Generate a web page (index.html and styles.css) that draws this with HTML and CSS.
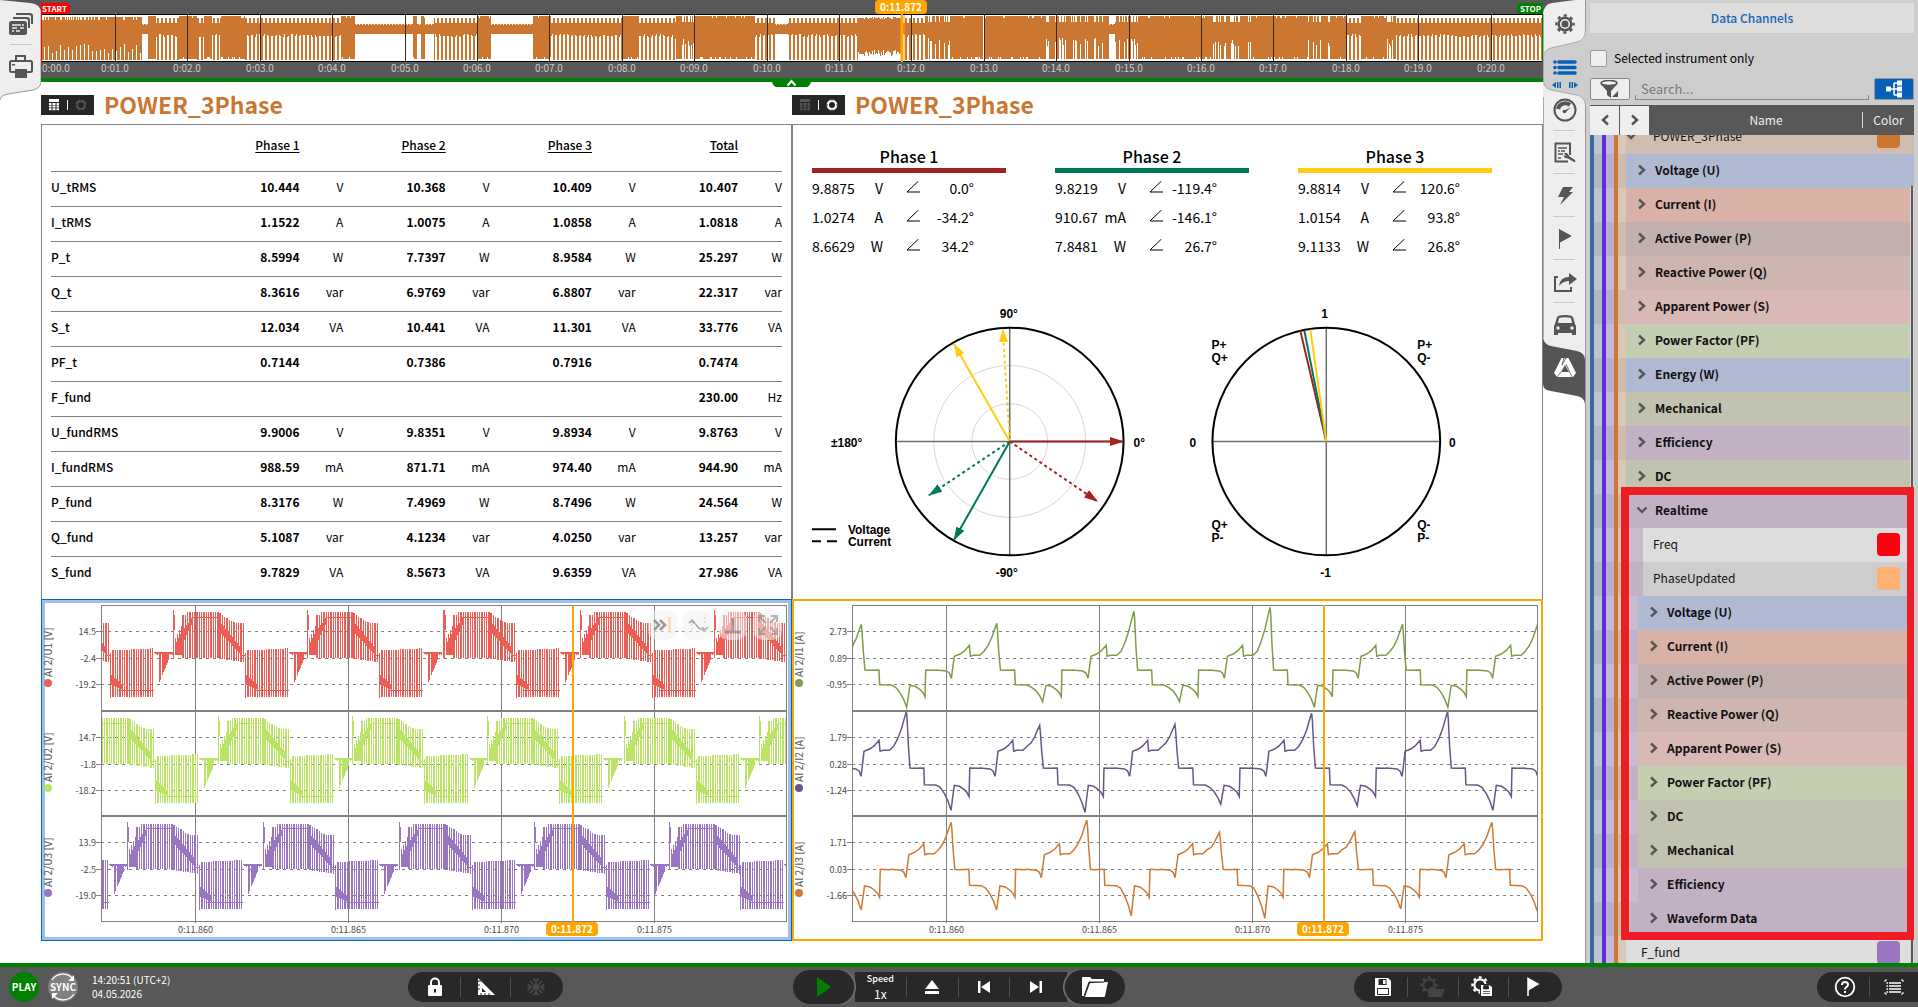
FILE: index.html
```html
<!DOCTYPE html>
<html lang="en">
<head>
<meta charset="utf-8">
<title>POWER_3Phase</title>
<link rel="stylesheet" href="styles.css">
</head>
<body>
<svg class="defs" aria-hidden="true">
  <symbol id="grid" viewBox="0 0 12 12"><path d="M1 0h10v3H1zM1 4h2.500v2H1zM4.500 4h3v2h-3zM8.500 4H11v2H8.500zM1 6.600h2.500v2H1zM4.500 6.600h3v2h-3zM8.500 6.600H11v2H8.500zM1 9.200h2.500v2H1zM4.500 9.200h3v2h-3zM8.500 9.200H11v2H8.500z" fill="currentColor"/></symbol>
  <symbol id="ring" viewBox="0 0 12 12"><circle cx="6" cy="6" r="4.200" fill="none" stroke="currentColor" stroke-width="2.400"/><path d="M6 0v2M12 6h-2M6 12v-2M0 6h2" stroke="#262626" stroke-width=".8"/></symbol>
  <symbol id="angle" viewBox="0 0 14 14"><path d="M12.500 0 1 11H14" fill="none" stroke="#000"/></symbol>
  <symbol id="right" viewBox="0 0 10 12"><path d="M2 1.500 7 6 2 10.500" fill="none" stroke="currentColor" stroke-width="2.400"/></symbol>
  <symbol id="left" viewBox="0 0 10 12"><path d="M8 1.500 3 6l5 4.500" fill="none" stroke="currentColor" stroke-width="2.400"/></symbol>
  <symbol id="down" viewBox="0 0 12 12"><path d="M1.500 3.500 6 8l4.500-4.500" fill="none" stroke="currentColor" stroke-width="2.400"/></symbol>
  <symbol id="gear" viewBox="0 0 20 20"><g fill="none" stroke="currentColor"><circle cx="10" cy="10" r="6.300" stroke-width="2.400"/><circle cx="10" cy="10" r="8.500" stroke-width="2.400" stroke-dasharray="3.200 3.476" stroke-dashoffset="1.600"/></g></symbol>
</svg>

<div class="workspace">
  <nav class="rail rail-left" aria-label="Screens">
    <svg class="rail-shape" width="41" height="100" viewBox="0 0 41 100"><path d="M0 0h41v78H0z" fill="#585858"/><path d="M0 78h41v4H0z" fill="#008000"/><path d="M0 82h41v18H0z" fill="#fff"/><path d="M0 0l30 3q11 1 11 10v69q0 6-8 8L8 94q-7 1-8 6z" fill="#eee"/><path d="M41 13v69q0 6-8 8L8 94q-7 1-8 6" fill="none" stroke="#999"/></svg>
    <button class="rail-btn" aria-label="Displays"><svg width="24" height="22" viewBox="0 0 24 22"><g fill="#555"><path d="M7 0h14q3 0 3 3v8h-2V4q0-2-2-2H7z"/><path d="M4 4h14q3 0 3 3v8h-2V8q0-2-2-2H4z"/><rect y="8" width="18" height="14" rx="2.500"/></g><path d="M3 12h9M13 12h2M3 15h5M11 15h4M3 18h2M7 18h4" stroke="#eee" stroke-width="1.300"/></svg></button>
    <button class="rail-btn" aria-label="Print"><svg width="24" height="23" viewBox="0 0 24 23"><g fill="none" stroke="#555" stroke-width="2"><path d="M7 7V1h9v6"/><rect x="1" y="6" width="22" height="11" rx="1.500"/></g><path d="M3 9h3v1.500H3zM6 14h12v9H6z" fill="#555"/></svg></button>
  </nav>

  <main class="main">
    <header class="timeline"><svg id="timeline" class="fill"></svg>
      <button class="collapse" aria-label="Collapse overview"><svg width="39" height="9" viewBox="0 0 39 9"><path d="M0 0h39v4q-1 4-4 5H4Q1 8 0 4z" fill="#008000"/><path d="M15.500 7.500l4-4.500 4 4.500" fill="none" stroke="#fff" stroke-width="2"/></svg></button>
    </header>

    <div class="titles">
      <div class="title"><div class="toggle"><button aria-label="Table view"><svg width="12" height="12"><use href="#grid"/></svg></button><i></i><button class="off" aria-label="Vector view"><svg width="12" height="12"><use href="#ring"/></svg></button></div><h1>POWER_3Phase</h1></div>
      <div class="title"><div class="toggle"><button class="off" aria-label="Table view"><svg width="12" height="12"><use href="#grid"/></svg></button><i></i><button aria-label="Vector view"><svg width="12" height="12"><use href="#ring"/></svg></button></div><h1>POWER_3Phase</h1></div>
    </div>

    <div class="pair panels">
      <section class="panel power">
        <table>
          <colgroup><col class="c-name"><col class="c-val"><col class="c-unit"><col class="c-val"><col class="c-unit"><col class="c-val"><col class="c-unit"><col class="c-val"><col class="c-unit"></colgroup>
          <thead><tr><td></td><th scope="col">Phase 1</th><td></td><th scope="col">Phase 2</th><td></td><th scope="col">Phase 3</th><td></td><th scope="col">Total</th><td></td></tr></thead>
          <tbody>
            <tr><th scope="row">U_tRMS</th><td>10.444</td><td>V</td><td>10.368</td><td>V</td><td>10.409</td><td>V</td><td>10.407</td><td>V</td></tr>
            <tr><th scope="row">I_tRMS</th><td>1.1522</td><td>A</td><td>1.0075</td><td>A</td><td>1.0858</td><td>A</td><td>1.0818</td><td>A</td></tr>
            <tr><th scope="row">P_t</th><td>8.5994</td><td>W</td><td>7.7397</td><td>W</td><td>8.9584</td><td>W</td><td>25.297</td><td>W</td></tr>
            <tr><th scope="row">Q_t</th><td>8.3616</td><td>var</td><td>6.9769</td><td>var</td><td>6.8807</td><td>var</td><td>22.317</td><td>var</td></tr>
            <tr><th scope="row">S_t</th><td>12.034</td><td>VA</td><td>10.441</td><td>VA</td><td>11.301</td><td>VA</td><td>33.776</td><td>VA</td></tr>
            <tr><th scope="row">PF_t</th><td>0.7144</td><td></td><td>0.7386</td><td></td><td>0.7916</td><td></td><td>0.7474</td><td></td></tr>
            <tr><th scope="row">F_fund</th><td></td><td></td><td></td><td></td><td></td><td></td><td>230.00</td><td>Hz</td></tr>
            <tr><th scope="row">U_fundRMS</th><td>9.9006</td><td>V</td><td>9.8351</td><td>V</td><td>9.8934</td><td>V</td><td>9.8763</td><td>V</td></tr>
            <tr><th scope="row">I_fundRMS</th><td>988.59</td><td>mA</td><td>871.71</td><td>mA</td><td>974.40</td><td>mA</td><td>944.90</td><td>mA</td></tr>
            <tr><th scope="row">P_fund</th><td>8.3176</td><td>W</td><td>7.4969</td><td>W</td><td>8.7496</td><td>W</td><td>24.564</td><td>W</td></tr>
            <tr><th scope="row">Q_fund</th><td>5.1087</td><td>var</td><td>4.1234</td><td>var</td><td>4.0250</td><td>var</td><td>13.257</td><td>var</td></tr>
            <tr><th scope="row">S_fund</th><td>9.7829</td><td>VA</td><td>8.5673</td><td>VA</td><td>9.6359</td><td>VA</td><td>27.986</td><td>VA</td></tr>
          </tbody>
        </table>
      </section>

      <section class="panel vectors">
        <div class="phases">
          <div class="phase"><h2 class="red">Phase 1</h2><table>
            <tr><td>9.8875</td><td>V</td><td><svg width="14" height="14"><use href="#angle"/></svg></td><td>0.0°</td></tr>
            <tr><td>1.0274</td><td>A</td><td><svg width="14" height="14"><use href="#angle"/></svg></td><td>-34.2°</td></tr>
            <tr><td>8.6629</td><td>W</td><td><svg width="14" height="14"><use href="#angle"/></svg></td><td>34.2°</td></tr></table></div>
          <div class="phase"><h2 class="green">Phase 2</h2><table>
            <tr><td>9.8219</td><td>V</td><td><svg width="14" height="14"><use href="#angle"/></svg></td><td>-119.4°</td></tr>
            <tr><td>910.67</td><td>mA</td><td><svg width="14" height="14"><use href="#angle"/></svg></td><td>-146.1°</td></tr>
            <tr><td>7.8481</td><td>W</td><td><svg width="14" height="14"><use href="#angle"/></svg></td><td>26.7°</td></tr></table></div>
          <div class="phase"><h2 class="yellow">Phase 3</h2><table>
            <tr><td>9.8814</td><td>V</td><td><svg width="14" height="14"><use href="#angle"/></svg></td><td>120.6°</td></tr>
            <tr><td>1.0154</td><td>A</td><td><svg width="14" height="14"><use href="#angle"/></svg></td><td>93.8°</td></tr>
            <tr><td>9.1133</td><td>W</td><td><svg width="14" height="14"><use href="#angle"/></svg></td><td>26.8°</td></tr></table></div>
        </div>
        <svg class="phasor" viewBox="0 0 750 336">
          <defs>
            <marker id="m-red" viewBox="0 0 14 10" refX="13.500" refY="5" markerWidth="14" markerHeight="10" markerUnits="userSpaceOnUse" orient="auto"><path d="M0 .5 14 5 0 9.500z" fill="#a02222"/></marker>
            <marker id="m-green" viewBox="0 0 14 10" refX="13.500" refY="5" markerWidth="14" markerHeight="10" markerUnits="userSpaceOnUse" orient="auto"><path d="M0 .5 14 5 0 9.500z" fill="#00785a"/></marker>
            <marker id="m-yellow" viewBox="0 0 14 10" refX="13.500" refY="5" markerWidth="14" markerHeight="10" markerUnits="userSpaceOnUse" orient="auto"><path d="M0 .5 14 5 0 9.500z" fill="#ffcc10"/></marker>
          </defs>
          <g fill="none" stroke="#d6d6d6"><circle cx="217" cy="180" r="76"/><circle cx="217" cy="180" r="38"/></g>
          <g stroke="#6e6e6e" stroke-width="1.500"><path d="M103 180h228M217 66v228M420 180h228M534 66v228"/></g>
          <g fill="none" stroke="#000" stroke-width="2"><circle cx="217" cy="180" r="114"/><circle cx="534" cy="180" r="114"/></g>
          <g stroke-width="2">
            <path d="M217 180 161 82" stroke="#ffcc10" marker-end="url(#m-yellow)"/>
            <path d="M217 180 210 67" stroke="#ffcc10" stroke-dasharray="3 3" marker-end="url(#m-yellow)"/>
            <path d="M217 180H331" stroke="#a02222" marker-end="url(#m-red)"/>
            <path d="M217 180 305 240" stroke="#a02222" stroke-dasharray="3 3" marker-end="url(#m-red)"/>
            <path d="M217 180 161 279" stroke="#00785a" marker-end="url(#m-green)"/>
            <path d="M217 180 136 234" stroke="#00785a" stroke-dasharray="3 3" marker-end="url(#m-green)"/>
            <path d="M534 180 508 69" stroke="#a02222"/><path d="M534 180 512 69" stroke="#00785a"/><path d="M534 180 518 68" stroke="#ffcc10"/>
            <path d="M19 268h24M19 280h9m6 0h10" stroke="#000"/>
          </g>
          <text x="207" y="56">90°</text><text x="38" y="186">±180°</text><text x="341" y="186">0°</text><text x="203" y="316">-90°</text>
          <text x="55" y="273">Voltage</text><text x="55" y="285">Current</text>
          <text x="529" y="56">1</text><text x="528" y="316">-1</text><text x="397" y="186">0</text><text x="657" y="186">0</text>
          <text x="419" y="87">P+</text><text x="419" y="100">Q+</text><text x="625" y="87">P+</text><text x="625" y="100">Q-</text>
          <text x="419" y="268">Q+</text><text x="419" y="281">P-</text><text x="625" y="268">Q-</text><text x="625" y="281">P-</text>
        </svg>
      </section>
    </div>

    <div class="pair">
      <section class="scope selected"><svg id="voltage" class="fill"></svg>
        <div class="tools">
          <button aria-label="Go to cursor"><svg width="24" height="20" viewBox="0 0 24 20"><path d="M3 5l5 5-5 5M9 5l5 5-5 5" fill="none" stroke="#999" stroke-width="2.500"/><path d="M18.500 2v16" stroke="#fcd89a" stroke-width="2"/></svg></button>
          <button aria-label="Autoscale"><svg width="24" height="20" viewBox="0 0 24 20"><path d="M3 8l3-3 3 3M6 5v2q2 0 5 4t8 4M16 12l3 3 3-3" fill="none" stroke="#aaa" stroke-width="1.500"/><path d="M6 9v8M19 2v8" stroke="#ccc" stroke-dasharray="2 2"/></svg></button>
          <button aria-label="Stack axes"><svg width="24" height="20" viewBox="0 0 24 20"><path d="M4 17h16M12 3v13" stroke="#777" stroke-opacity=".6" stroke-width="3"/></svg></button>
          <button aria-label="Full screen"><svg width="24" height="20" viewBox="0 0 24 20"><path d="M3 7V1h6M15 1h6v6M21 13v6h-6M9 19H3v-6M3 1l7 7M21 1l-7 7M21 19l-7-7M3 19l7-7" fill="none" stroke="#888" stroke-opacity=".6" stroke-width="2"/></svg></button>
        </div>
      </section>
      <section class="scope"><svg id="current" class="fill"></svg></section>
    </div>
  </main>

  <nav class="rail rail-right" aria-label="Tools">
    <svg class="rail-shape" width="43" height="406" viewBox="0 0 43 406"><path d="M0 0h43v78H0z" fill="#585858"/><path d="M0 78h43v4H0z" fill="#008000"/><path d="M0 14q1-10 9-11L32 0h10v360L0 345z" fill="#eee"/><path d="M42.500 0v406" stroke="#999"/><path d="M43 30h-1q1 10-8 12L8 48q-7 2-7.500 8v24q0 8 7.500 10l26 5q8 2 8.500 10H43z" fill="#cdcdcd"/><path d="M42.500 30q0 10-8.500 12L8 48q-7 2-7.500 8v24q0 8 7.500 10l26 5q8 2 8.500 10M.5 97v240M.5 14v42" fill="none" stroke="#aaa"/><path d="M0 337q1 8 8 9l26 5q8 2 8 9v44q-1-7-8-8l-26-5q-8-1-8-7z" fill="#555"/></svg>
    <button class="rail-btn" aria-label="Settings"><svg width="20" height="20"><use href="#gear"/><circle cx="10" cy="10" r="3.500" fill="#555"/></svg></button>
    <button class="rail-btn list" aria-label="Data channels"><svg width="26" height="28" viewBox="0 0 26 28"><g stroke="#0560b8" stroke-width="3.600"><path d="M7 2h16M7 7.500h16M7 13h16" stroke-linecap="round"/></g><g fill="#0560b8"><circle cx="3" cy="2" r="1.800"/><circle cx="3" cy="7.500" r="1.800"/><circle cx="3" cy="13" r="1.800"/><path d="M0 25l4-3v6zM26 25l-4-3v6zM5 22h1.500v6H5zM7.500 22H9v6H7.500zM17 22h1.500v6H17zM19.500 22H21v6h-1.500z"/></g></svg></button>
    <button class="rail-btn" aria-label="Instruments"><svg width="24" height="24" viewBox="0 0 24 24"><circle cx="12" cy="12" r="10.500" fill="none" stroke="#555" stroke-width="2"/><path d="M5 11a7.500 7.500 0 0 1 12-4" fill="none" stroke="#555" stroke-width="4"/><path d="M10 13l8-3.500-6.500 5.500z" fill="#555"/><circle cx="11.500" cy="13.500" r="1.800" fill="#555"/></svg></button>
    <button class="rail-btn" aria-label="Instrument properties"><svg width="24" height="24" viewBox="0 0 24 24"><path d="M17 14V2.500H2.500v18H15" fill="none" stroke="#555" stroke-width="2"/><path d="M5 7h9M5 10h2M8 10h4M5 13h5M5 17h3" stroke="#555" stroke-width="1.500"/><path d="M11 12q3-1 4.500 2l.5 1 6 4q1 2-1 2l-6-3.500q-4 0-4.500-3.500l2.500 1z" fill="#555"/></svg></button>
    <button class="rail-btn" aria-label="Triggers"><svg width="18" height="22" viewBox="0 0 18 22"><path d="M7 2h10l-4 5h4L4 20l4-8H2z" fill="#555"/></svg></button>
    <button class="rail-btn" aria-label="Events"><svg width="16" height="22" viewBox="0 0 16 22"><path d="M2.500 1v20M3 2l11 6-11 6z" fill="#555" stroke="#555"/></svg></button>
    <button class="rail-btn" aria-label="Export"><svg width="24" height="22" viewBox="0 0 24 22"><path d="M5 6H2v14h16v-4" fill="none" stroke="#555" stroke-width="2"/><path d="M6 15q1-9 10-9V2l8 6-8 6v-4q-6 0-10 5z" fill="#555"/></svg></button>
    <button class="rail-btn" aria-label="Vehicle"><svg width="24" height="22" viewBox="0 0 24 22"><path d="M4 3q1-2 8-2t8 2l2 7 1 2v9h-4v-2H5v2H1v-9l1-2zM6 4 5 9h14l-1-5q-6-1.500-12 0z" fill="#555" fill-rule="evenodd"/><circle cx="5" cy="14" r="1.700" fill="#eee"/><circle cx="19" cy="14" r="1.700" fill="#eee"/></svg></button>
    <button class="rail-btn" aria-label="Power"><svg width="24" height="22" viewBox="0 0 24 22"><path d="M8.500 1h7L23 16l-3 4H4l-3-4zM12 8l-4 7h8z" fill="#fff" fill-rule="evenodd"/><path d="M11 1 13 1 9 8zM13 7l6 13M4 20l4-5" stroke="#555" fill="none" stroke-width=".8"/></svg></button>
  </nav>

  <aside class="side">
    <h2 class="side-title">Data Channels</h2>
    <label class="only"><input type="checkbox"> Selected instrument only</label>
    <div class="filter">
      <button class="filter-btn" aria-label="Filter"><svg width="20" height="18" viewBox="0 0 20 18"><ellipse cx="9" cy="3" rx="8" ry="2.500" fill="#eee" stroke="#555" stroke-width="1.500"/><path d="M1 4.500Q9 7.500 17 4.500L11 11v7L7 15v-4zM18 11v6h-6z" fill="#555"/></svg></button>
      <input class="search" type="text" placeholder="Search..." aria-label="Search channels">
      <button class="filter-btn tree-btn" aria-label="Tree view"><svg width="20" height="18" viewBox="0 0 20 18"><path d="M5 9h8M10 3v12M10 3h4M10 15h4" stroke="#fff" stroke-width="1.500" fill="none"/><path d="M2 6.500h5v5H2zM13 .5h5v5h-5zM13 6.500h5v5h-5zM13 12.500h5v5h-5z" fill="#fff"/></svg></button>
    </div>
    <div class="list-head"><button aria-label="Previous columns"><svg width="10" height="12"><use href="#left"/></svg></button><button aria-label="Next columns"><svg width="10" height="12"><use href="#right"/></svg></button><span class="h-name">Name</span><span class="h-color">Color</span></div>
    <div class="tree">
      <div class="rows">
        <div class="row root"><svg width="12" height="12"><use href="#down"/></svg><span>POWER_3Phase</span><i class="sw orange"></i></div>
        <div class="row volt"><svg width="10" height="12"><use href="#right"/></svg><b>Voltage (U)</b></div>
        <div class="row curr"><svg width="10" height="12"><use href="#right"/></svg><b>Current (I)</b></div>
        <div class="row act"><svg width="10" height="12"><use href="#right"/></svg><b>Active Power (P)</b></div>
        <div class="row react"><svg width="10" height="12"><use href="#right"/></svg><b>Reactive Power (Q)</b></div>
        <div class="row app"><svg width="10" height="12"><use href="#right"/></svg><b>Apparent Power (S)</b></div>
        <div class="row pf"><svg width="10" height="12"><use href="#right"/></svg><b>Power Factor (PF)</b></div>
        <div class="row volt"><svg width="10" height="12"><use href="#right"/></svg><b>Energy (W)</b></div>
        <div class="row dc"><svg width="10" height="12"><use href="#right"/></svg><b>Mechanical</b></div>
        <div class="row eff"><svg width="10" height="12"><use href="#right"/></svg><b>Efficiency</b></div>
        <div class="row dc"><svg width="10" height="12"><use href="#right"/></svg><b>DC</b></div>
        <div class="marked">
          <div class="row eff"><svg width="12" height="12"><use href="#down"/></svg><b>Realtime</b></div>
          <div class="row sub leaf pale"><span>Freq</span><i class="sw pure"></i></div>
          <div class="row sub leaf grey"><span>PhaseUpdated</span><i class="sw peach"></i></div>
          <div class="row sub volt"><svg width="10" height="12"><use href="#right"/></svg><b>Voltage (U)</b></div>
          <div class="row sub curr"><svg width="10" height="12"><use href="#right"/></svg><b>Current (I)</b></div>
          <div class="row sub act"><svg width="10" height="12"><use href="#right"/></svg><b>Active Power (P)</b></div>
          <div class="row sub react"><svg width="10" height="12"><use href="#right"/></svg><b>Reactive Power (Q)</b></div>
          <div class="row sub app"><svg width="10" height="12"><use href="#right"/></svg><b>Apparent Power (S)</b></div>
          <div class="row sub pf"><svg width="10" height="12"><use href="#right"/></svg><b>Power Factor (PF)</b></div>
          <div class="row sub dc"><svg width="10" height="12"><use href="#right"/></svg><b>DC</b></div>
          <div class="row sub dc"><svg width="10" height="12"><use href="#right"/></svg><b>Mechanical</b></div>
          <div class="row sub eff"><svg width="10" height="12"><use href="#right"/></svg><b>Efficiency</b></div>
          <div class="row sub eff"><svg width="10" height="12"><use href="#right"/></svg><b>Waveform Data</b></div>
        </div>
        <div class="row last pale"><span>F_fund</span><i class="sw violet"></i></div>
      </div>
      <div class="thumb"></div>
    </div>
  </aside>
</div>

<footer class="bar">
  <div class="status"><button class="dot play">PLAY</button><button class="dot sync"><svg class="sync-ring" width="30" height="30" viewBox="0 0 30 30"><path d="M4 8a13 13 0 0 1 21-1M26 22a13 13 0 0 1-21 1" fill="none" stroke="#fff" stroke-width="1.200"/><path d="M26 3v6h-6zM4 27v-6h6z" fill="#fff"/></svg>SYNC</button><div class="clock">14:20:51 (UTC+2)<br>04.05.2026</div></div>
  <div><div class="pill">
    <button aria-label="Lock"><svg width="16" height="20" viewBox="0 0 16 20"><path d="M4 9V5.500a4 4 0 0 1 8 0V9" fill="none" stroke="#fff" stroke-width="2"/><rect x="1" y="8" width="14" height="11" rx="1" fill="#fff"/><path d="M8 12v3.500" stroke="#282828" stroke-width="2"/></svg></button>
    <button aria-label="Design mode"><svg width="20" height="20" viewBox="0 0 20 20"><path d="M2 1v17h17zM6 11l4 4H6z" fill="#fff" fill-rule="evenodd"/><path d="M2 4l3 0M5 18v-2M9 18v-2M13 18v-2M2 8h2M2 12h2" stroke="#282828"/></svg></button>
    <button class="dim" aria-label="Freeze"><svg width="20" height="20" viewBox="0 0 20 20"><path d="M10 1v18M1 10h18M3.500 3.500l13 13M16.500 3.500l-13 13M7 2l3 3 3-3M7 18l3-3 3 3M2 7l3 3-3 3M18 7l-3 3 3 3" fill="none" stroke="#484848" stroke-width="1.700"/></svg></button>
  </div></div>
  <div class="transport">
    <button class="big run" aria-label="Play"><svg width="16" height="20" viewBox="0 0 16 20"><path d="M1 0 15 10 1 20z" fill="#008000"/></svg></button>
    <div class="pill mid">
      <button class="speed"><small>Speed</small><span>1x</span></button>
      <button aria-label="Eject"><svg width="16" height="16" viewBox="0 0 16 16"><path d="M8 1l7 9H1zM1 12h14v3H1z" fill="#fff"/></svg></button>
      <button aria-label="To start"><svg width="16" height="16" viewBox="0 0 16 16"><path d="M2 2h2.500v12H2zM14 2v12L5 8z" fill="#fff"/></svg></button>
      <button aria-label="To end"><svg width="16" height="16" viewBox="0 0 16 16"><path d="M11.500 2H14v12h-2.500zM2 2v12l9-6z" fill="#fff"/></svg></button>
    </div>
    <button class="big open" aria-label="Open file"><svg width="28" height="22" viewBox="0 0 28 22"><path d="M1 20V2q0-1 1-1h7l2 2h12v3H8L3 20z" fill="#fff"/><path d="M9 7l18-1-3 14q0 1-1 1H4z" fill="#fff"/><path d="M3.500 19 8 6h15" fill="none" stroke="#282828"/></svg></button>
  </div>
  <div><div class="pill right">
    <button aria-label="Save"><svg width="18" height="20" viewBox="0 0 18 20"><path d="M1 1h13l3 3v15H1z" fill="#fff"/><path d="M4.500 2h8v6h-8zM3 11h12v7H3z" fill="#282828"/><path d="M9 3h2.500v4H9zM4 12h10v5H4z" fill="#fff"/></svg></button>
    <button class="dim" aria-label="Load setup"><svg width="26" height="22" viewBox="0 0 26 22" color="#444"><use href="#gear" width="18" height="18"/><path d="M8 20 10 11h5l1 2h9l-3 8H8z" fill="#444"/></svg></button>
    <button aria-label="Save setup"><svg width="24" height="22" viewBox="0 0 24 22" color="#fff"><use href="#gear" width="18" height="18"/><path d="M9 8h14v13H9z" fill="#282828"/><path d="M10 9h8l3 2v9H10z" fill="#fff"/><path d="M12.500 9.500h5v3.500h-5zM12 15.500h7M12 17.500h7" fill="#282828" stroke="#282828" stroke-width=".7"/></svg></button>
    <button aria-label="Add event"><svg width="14" height="20" viewBox="0 0 14 20"><path d="M2 1v18M2 1.500 12 7 2 13z" fill="#fff" stroke="#fff" stroke-width="1.500"/></svg></button>
  </div></div>
  <div class="pill end">
    <button aria-label="Help"><svg width="22" height="22" viewBox="0 0 22 22"><circle cx="11" cy="11" r="9.300" fill="none" stroke="#fff" stroke-width="1.800"/><path d="M8 9q0-3 3-3t3 2.500q0 1.500-1.500 2.500T11 13.500M11 15v2" fill="none" stroke="#fff" stroke-width="2"/></svg></button>
    <button aria-label="Menu"><svg width="20" height="16" viewBox="0 0 20 16"><path d="M5 4h12M5 7h12M5 10h12M5 13h12M2.500 4h1.500M2.500 7h1.500M2.500 10h1.500M2.500 13h1.500" stroke="#fff" stroke-width="1.500"/><path d="M1 3V1h2M17 1h2v2M1 13v2h2M19 13v2h-2" fill="none" stroke="#fff"/></svg></button>
  </div>
</footer>
<script src="charts.js"></script>
</body>
</html>
```
FILE: styles.css
```css
* { box-sizing: border-box; }
body {
  margin: 0;
  height: 100vh;
  display: flex;
  flex-direction: column;
  overflow: hidden;
  background: #fff;
  color: #000;
  font: 12px/16px "Noto Sans CJK JP", "Noto Sans", sans-serif;
}
button { border: 0; padding: 0; margin: 0; background: none; font: inherit; color: inherit; display: flex; align-items: center; justify-content: center; }
svg { display: block; flex: none; }
h1, h2 { margin: 0; }
.defs { position: absolute; width: 0; height: 0; }
.fill { width: 100%; height: 100%; }

.workspace { flex: 1; min-height: 0; display: grid; grid-template-columns: 41px minmax(0, 1fr) 43px 332px; }

/* side rails */
.rail { position: relative; color: #555; padding-top: 2px; }
.rail-shape { position: absolute; left: 0; top: 0; }
.rail-btn { position: relative; width: 100%; height: 43px; }
.rail-right { background: linear-gradient(to left, #999 1px, transparent 1px); }
.rail-btn::after { content: ""; position: absolute; bottom: 0; left: 10px; width: 22px; height: 1px; background: #c8c8c8; }
.rail-left .rail-btn:last-child::after,
.rail-right .rail-btn:nth-child(2)::after,
.rail-right .rail-btn:nth-child(3)::after,
.rail-right .rail-btn:nth-child(9)::after,
.rail-right .rail-btn:last-child::after { display: none; }
.rail-btn.list { padding-top: 14px; }

/* main column */
.main { min-width: 0; display: grid; grid-template-rows: 82px 42px minmax(0, 1fr) 342px 22px; }
.timeline { position: relative; background: #585858; border-bottom: 4px solid #008000; }
.collapse { position: absolute; left: 50%; top: 78px; margin-left: -20px; z-index: 1; }
.titles, .pair { display: grid; grid-template-columns: 1fr 1fr; }
.title { display: flex; align-items: center; gap: 10px; padding-top: 4px; }
.title h1 { font-size: 23px; line-height: 30px; padding-bottom: 2px; font-weight: 700; color: #cb7732; }
.toggle { width: 53px; height: 20px; background: #262626; color: #fff; display: flex; align-items: center; justify-content: space-evenly; }
.toggle i { width: 1px; height: 10px; background: #fff; }
.toggle .off { color: #555; }
.panel { border: 1px solid #808080; border-bottom: 0; min-width: 0; overflow: hidden; }

.power { padding: 0 9px; }
.power table { width: 100%; table-layout: fixed; border-collapse: collapse; }
.c-name { width: 20%; }
.c-val { width: 14%; }
.c-unit { width: 6%; }
.power tr { height: 35px; border-bottom: 1px solid #808080; }
.power tbody tr:last-child { border-bottom: 0; }
.power thead tr { height: 46px; }
.power td, .power th { padding: 0 0 4px; text-align: right; font-weight: 700; }
.power td:nth-child(odd) { font-weight: 400; }
.power thead th { font-weight: 500; text-decoration: underline; text-underline-offset: 2px; padding-bottom: 6px; }
.power tbody th { text-align: left; font-weight: 500; }

.vectors { display: flex; flex-direction: column; }
.phases { display: grid; grid-template-columns: repeat(3, 1fr); gap: 49px; padding: 19px 50px 0 19px; }
.phase h2 { font-size: 16px; line-height: 24px; font-weight: 500; text-align: center; border-bottom: 5px solid #000; }
.phase .red { border-color: #a02222; }
.phase .green { border-color: #00785a; }
.phase .yellow { border-color: #ffcc10; }
.phase table { border-collapse: collapse; table-layout: fixed; width: 162px; font-size: 14px; }
.phase td { padding: 0; height: 29px; text-align: right; white-space: nowrap; }
.phase td:first-child { text-align: left; width: 45px; }
.phase td:nth-child(2) { width: 26px; }
.phase td:nth-child(3) { width: 37px; }
.phase td svg { margin-left: auto; }
.phasor { width: 100%; flex: 1; min-height: 0; font: bold 12px "Liberation Sans", sans-serif; }

/* scopes */
.scope { position: relative; min-width: 0; box-shadow: inset 0 0 0 2px #ffa500; }
.selected { box-shadow: inset 0 0 0 1px #0a64c8, inset 0 0 0 4px #9cc0e8; }
.tools { position: absolute; top: 11px; right: 10px; display: flex; gap: 6px; }
.tools button { width: 29px; height: 30px; border-radius: 10px; background: rgba(240, 240, 240, .55); }

/* chart drawing */
.label { font-size: 9px; fill: #4a4a4a; }
.tl-label { font-size: 10px; fill: #ccc; }
.chip-text { font-size: 10px; font-weight: 700; fill: #fff; }
.tag-text { font-size: 8px; font-weight: 700; fill: #fff; }
.channel { font-size: 10px; font-weight: 500; fill: #666; }

/* data channels */
.side { display: flex; flex-direction: column; background: #cdcdcd; padding: 3px 4px 0 4px; min-height: 0; }
.side-title { background: #ddd; height: 30px; line-height: 30px; text-align: center; font-size: 12px; font-weight: 500; color: #1864b8; }
.only { display: flex; align-items: center; gap: 7px; margin-top: 16px; height: 18px; }
.only input { appearance: none; width: 17px; height: 17px; margin: 0; background: #eee; border: 1px solid #999; border-radius: 2px; }
.filter { display: flex; align-items: stretch; gap: 5px; margin-top: 11px; height: 22px; }
.filter-btn { width: 40px; background: #eee; border: 1px solid #888; border-radius: 2px; }
.tree-btn { background: #0560b8; border-color: #999; }
.search { flex: 1; min-width: 0; border: 0; padding: 0 6px; background: linear-gradient(#888, #888) left bottom / 1px 5px no-repeat, linear-gradient(#888, #888) right bottom / 1px 5px no-repeat, linear-gradient(#888, #888) bottom / 100% 1px no-repeat; font: inherit; font-size: 13px; }
.search::placeholder { color: #777; opacity: 1; }
.list-head { display: flex; align-items: center; height: 30px; margin-top: 5px; background: #585858; color: #eee; flex: none; }
.list-head button { width: 29px; height: 29px; margin-right: 1px; background: #eee; color: #555; }
.h-name { flex: 1; text-align: center; padding-left: 20px; }
.h-color { width: 52px; text-align: center; line-height: 16px; border-left: 1px solid #ddd; }
.tree { flex: 1; min-height: 0; overflow: hidden; position: relative; }
.rows { margin-top: -15px; }
.row {
  --a: #bcc5d1; --b: #c3bada; --c: #d9c7b9; --m: #cbb9cd; --bg: #ddd;
  display: flex; align-items: center; height: 34px; padding: 0 14px 2px 47px; color: #111;
  background: linear-gradient(to right, #3c69a0 4px, var(--a) 4px 12px, #5b2fdb 12px 16px, var(--b) 16px 24px, #cb7732 24px 28px, var(--c) 28px 36px, var(--bg) 36px);
}
.rows > .row:nth-child(even), .marked .row:nth-child(odd) { --a: #afb8c4; --b: #b8afce; --c: #cfbcae; --m: #c2b1c5; }
.row svg { color: #555; margin-right: 8px; }
.row svg[width="12"] { margin: 0 7px 0 -1px; }
.row b, .row span { flex: 1; white-space: nowrap; font-weight: 700; }
.row span { font-weight: 400; }
.row.root { --bg: #cfbdaf; padding-left: 36px; }
.row.root svg { margin-right: 16px; }
.row.volt { --bg: #b0b9d2; }
.row.curr { --bg: #d8b2a6; }
.row.act { --bg: #c2b0ae; }
.row.react { --bg: #cfb5b0; }
.row.app { --bg: #d9b9b5; }
.row.pf { --bg: #c5ceb0; }
.row.dc { --bg: #c1c2af; }
.row.eff { --bg: #c2b1c5; }
.row.grey { --bg: #cdcdcd; }
.row.sub { padding-left: 59px; background: linear-gradient(to right, #3c69a0 4px, var(--a) 4px 12px, #5b2fdb 12px 16px, var(--b) 16px 24px, #cb7732 24px 28px, var(--c) 28px 40px, var(--m) 40px 48px, var(--bg) 48px); }
.row.leaf { padding-left: 63px; background: linear-gradient(to right, #3c69a0 4px, var(--a) 4px 12px, #5b2fdb 12px 16px, var(--b) 16px 24px, #cb7732 24px 28px, var(--c) 28px 40px, var(--m) 40px 53px, var(--bg) 53px); }
.row.last { padding-left: 51px; }
.sw { width: 23px; height: 23px; border-radius: 4px; }
.orange { background: #cb7732; }
.pure { background: #ff0010; }
.peach { background: #ffb074; }
.violet { background: #9a76c2; }
.marked { position: relative; }
.marked::after { content: ""; position: absolute; z-index: 1; left: 31px; right: -1px; top: -7px; bottom: -4px; border: 8px solid #ee1c25; }
.thumb { position: absolute; right: 0; top: 50px; bottom: 0; width: 4px; border: solid #d8d8d8; border-width: 0 1px; background: #585858; border-radius: 2px 2px 0 0; }

/* bottom bar */
.bar { position: relative; z-index: 2; height: 44px; border-top: 4px solid #008000; background: #585858; color: #fff; display: grid; grid-template-columns: 408fr 384fr 562fr 463fr 101fr; align-items: center; }
.status { display: flex; align-items: center; gap: 9px; padding-left: 9px; }
.dot { position: relative; width: 30px; height: 30px; border-radius: 50%; font-size: 10px; font-weight: 700; }
.play { background: #008000; }
.sync { background: #808080; }
.sync-ring { position: absolute; left: 0; top: 0; }
.clock { font-size: 10px; line-height: 14px; padding-left: 5px; }
.pill { display: flex; align-items: center; height: 30px; width: 155px; padding: 0 2px; border-radius: 15px; background: #282828; }
.pill button { flex: 1; height: 20px; }
.pill button + button { border-left: 1px solid #505050; }
.pill.right { width: 208px; padding: 0 4px; }
.pill.end { width: auto; padding: 0 0 0 4px; border-radius: 15px 0 0 15px; }
.transport { display: flex; align-items: center; }
.pill.mid { width: 212px; border-radius: 0; padding: 0 6px 0 0; }
.big { height: 36px; border-radius: 18px; background: #282828; border: 1px solid #585858; box-shadow: 1px 0 0 #777; z-index: 1; }
.run { width: 63px; }
.open { width: 62px; margin-left: -3px; box-shadow: -1px 0 0 #777; }
.pill .speed { flex-direction: column; height: 30px; }
.speed small { font-size: 9px; line-height: 13px; font-weight: 500; }
.speed span { font-size: 12px; line-height: 17px; }
```
FILE: charts.js
```js
(function () {
  var NS = 'http://www.w3.org/2000/svg';

  function el(parent, name, attrs, text) {
    var node = document.createElementNS(NS, name);
    for (var key in attrs) node.setAttribute(key, attrs[key]);
    if (text !== undefined) node.textContent = text;
    parent.appendChild(node);
    return node;
  }
  function line(p, x1, y1, x2, y2, color, width, dash) {
    var a = { x1: x1, y1: y1, x2: x2, y2: y2, stroke: color, 'stroke-width': width || 1, 'shape-rendering': 'crispEdges' };
    if (dash) a['stroke-dasharray'] = dash;
    el(p, 'line', a);
  }
  function random(seed) {
    return function () { seed = (seed * 16807) % 2147483647; return seed / 2147483647; };
  }
  function lerp(a, b, t) { return a + (b - a) * t; }

  /* ---- recording overview ---- */
  // [start, end, kind] in pixels of a 1502 px wide overview
  // s solid, n toothed bottom edge, b solid with raised bottom, d dense with gaps, c evenly spaced teeth, t thin band
  var OVERVIEW = [
    [0, 101, 'n'], [101, 107, 't'], [107, 115, 's'], [115, 138, 'c'], [138, 156, 's'], [156, 163, 'c'], [163, 171, 's'],
    [171, 179, 'c'], [179, 204, 's'], [204, 300, 'c'], [300, 314, 's'], [314, 372, 't'], [372, 376, 's'], [376, 380, 't'],
    [380, 384, 's'], [384, 393, 't'], [393, 437, 'c'], [437, 450, 's'], [450, 492, 't'], [492, 510, 's'], [510, 582, 'c'],
    [582, 598, 's'], [598, 634, 'c'], [634, 658, 'd'], [658, 714, 's'], [714, 734, 'c'], [734, 747, 't'], [747, 817, 'c'],
    [817, 860, 'b'], [860, 884, 'c'], [884, 909, 'd'], [909, 942, 's'], [944, 1003, 's'], [1003, 1032, 'd'],
    [1032, 1068, 'd'], [1068, 1074, 't'], [1074, 1097, 'd'], [1097, 1172, 's'], [1172, 1211, 'd'], [1211, 1267, 's'],
    [1267, 1292, 'd'], [1292, 1306, 's'], [1306, 1320, 'c'], [1320, 1345, 's'], [1345, 1355, 'd'], [1355, 1502, 'c']
  ];

  function drawOverview() {
    var svg = document.getElementById('timeline');
    var w = svg.clientWidth, k = w / 1502, rnd = random(77), d = '';
    el(svg, 'rect', { x: 0, y: 14, width: w, height: 48, fill: '#000' });
    el(svg, 'rect', { x: 0, y: 15, width: w, height: 46, fill: '#fff' });
    OVERVIEW.forEach(function (seg) {
      for (var x = seg[0]; x < seg[1]; x++) {
        var top, bottom, r = rnd(), phase = x % 4;
        if (seg[2] === 's') { top = r < .1 ? 18 : 16; bottom = r > .8 ? 57 : 58.5; }
        else if (seg[2] === 'b') { top = 17 + r * 2; bottom = 50 + r * 6; }
        else if (seg[2] === 'n') { top = r < .3 ? 20 : 17; bottom = phase < 3 ? 60 : 44 + r * 9; }
        else if (seg[2] === 'd') { top = r < .35 ? 22 : 16; bottom = r < .3 ? 38 + r * 30 : 59; }
        else if (seg[2] === 'c') { top = phase < 2 ? 18 : 23; bottom = phase < 2 ? 60 : 34 + r * 3; }
        else { top = 24 + (x % 3 ? 0 : 1); bottom = 34; }
        d += 'M' + (x * k + .5) + ' ' + top + 'V' + bottom;
      }
    });
    el(svg, 'path', { d: d, stroke: '#cb7732', 'stroke-width': 1.1 * k, fill: 'none', 'shape-rendering': 'crispEdges' });
    for (var s = 0; s <= 20; s++) {
      var gx = Math.round((1.5 + s * 72.4) * k);
      if (s) line(svg, gx, 15, gx, 61, '#3a2a20', 1);
      el(svg, 'text', { x: s ? gx : 1, y: 72, 'text-anchor': s ? 'middle' : 'start', 'class': 'tl-label' }, '0:' + (s < 10 ? '0' : '') + s + '.0');
    }
    el(svg, 'path', { d: 'M0 3h25q4 0 4 4v3q0 4-4 4H0z', fill: '#f00' });
    el(svg, 'text', { x: 1, y: 12, 'class': 'tag-text' }, 'START');
    el(svg, 'path', { d: 'M' + w + ' 3h-22q-4 0-4 4v3q0 4 4 4h22z', fill: '#008000' });
    el(svg, 'text', { x: w - 23, y: 12, 'class': 'tag-text' }, 'STOP');
    line(svg, 0, 14, 0, 62, '#f00', 2);
    line(svg, w, 14, w, 62, '#008000', 2);
    var cx = Math.round(861 * k);
    el(svg, 'rect', { x: cx - 2, y: 15, width: 5, height: 46, fill: '#ffa500', opacity: .5 });
    line(svg, cx, 13, cx, 62, '#ffa500', 2);
    el(svg, 'rect', { x: cx - 27, y: 0, width: 52, height: 14, rx: 4, fill: '#ffa500' });
    el(svg, 'text', { x: cx - 1, y: 11, 'text-anchor': 'middle', 'class': 'chip-text' }, '0:11.872');
  }

  /* ---- scopes ---- */
  var TICK_Y = [[32, 59, 85], [138, 165, 191], [243, 270, 296]];

  // switched inverter voltage; start is the rising jump, dy the offset of the strip
  function pwm(start, dy) {
    var d = '', i, n;
    function bar(u, a, b) { d += 'M' + (Math.round((start + u) / 3 - 41) + .5) + ' ' + ((a + dy) / 3 - 9) + 'V' + ((b + dy) / 3 - 9); }
    function flat(a, b, v) { d += 'M' + ((start + a) / 3 - 41) + ' ' + (Math.round((v + dy) / 3 - 9) + .5) + 'H' + ((start + b) / 3 - 41); }
    // pulse train with alternating two and three pixel pitch, every third pulse doubled
    function train(from, to, top, bottom) {
      for (i = from, n = 0; i <= to; i += n % 3 ? 6 : 9, n++) {
        var t = (i - from) / (to - from);
        bar(i, top(t), bottom(t));
        if (n % 3 === 0) bar(i + 3, top(t), bottom(t));
      }
    }
    bar(0, 60, 205);
    bar(3, 75, 120);
    for (i = 6; i < 27; i += 3) bar(i, 155 - i * 2 + (i % 2 ? 20 : 0), 196);
    train(27, 135, function (t) { return t < .1 ? 75 : 66; }, function () { return 203; });
    for (i = 30; i < 58; i += 3) bar(i, lerp(118, 80, (i - 30) / 28), lerp(155, 95, (i - 30) / 28));
    train(138, 213, function (t) { return lerp(70, 100, Math.min(1, t * 1.6)); }, function (t) { return lerp(206, 217, t); });
    for (i = 138; i < 205; i += 3) bar(i, lerp(95, 175, (i - 138) / 67), lerp(125, 197, (i - 138) / 67));
    bar(215, 190, 325);
    train(221, 345, function (t) { return 181 - t * 6; }, function () { return 321; });
    for (i = 218; i < 252; i += 3) bar(i, lerp(255, 285, (i - 218) / 34), lerp(285, 300, (i - 218) / 34));
    [356, 362, 365, 371, 374, 377, 380, 383, 386, 389, 395, 401].forEach(function (u) { bar(u, 186, u < 360 ? 196 : lerp(276, 194, Math.min(1, (u - 362) / 34))); });
    flat(55, 135, 80); flat(240, 347, 301); flat(347, 403, 187); flat(350, 403, 190); flat(200, 215, 196);
    return d;
  }

  // rectifier current between two neighbouring peaks
  function currentCycle(x0, x1, c, pk, pk2, tr) {
    var B = c.base, H = c.high, L = c.low, k = (x1 - x0) / 406, dip = B + 25, bump = H - 30;
    var pts = [[0, pk], [2, pk + 20], [6, lerp(pk, B, .6)], [11, B], [20, B + 1], [53, B], [55, L], [90, L + 1], [103, L + 8], [116, lerp(L, tr, .35)], [127, lerp(L, tr, .65)], [136, tr],
      [141, lerp(L, tr, .5)], [146, L + 2], [162, L + 5], [175, L + 14], [184, L + 23], [191, L + 36], [193, B], [220, B + 1], [225, B], [255, B + 3], [264, B + 9], [270, dip],
      [274, B - 5], [279, H + 3], [296, H - 4], [310, H - 14], [324, bump], [327, H + 3], [336, H], [355, H], [368, H - 12], [380, lerp(H, pk2, .3)], [391, lerp(H, pk2, .55)], [399, lerp(H, pk2, .8)]];
    return pts.map(function (p) { return (x0 + p[0] * k).toFixed(1) + ' ' + (p[1] / 3 - 9).toFixed(1); }).join('L');
  }

  function drawScope(id, channels) {
    var svg = document.getElementById(id);
    var w = svg.clientWidth, right = w - 5, left = 60, k = (right - left) / 685;
    var clip = el(svg, 'clipPath', { id: id + '-clip' });
    el(clip, 'rect', { x: left, y: 6, width: right - left, height: 316 });
    function X(v) { return Math.floor(left + (v - 60) * k) + .5; }
    [[154, '0:11.860'], [307, '0:11.865'], [460, '0:11.870'], [613, '0:11.875']].forEach(function (g) {
      line(svg, X(g[0]), 6, X(g[0]), 324, '#808080', 1);
      el(svg, 'text', { x: X(g[0]), y: 334, 'text-anchor': 'middle', 'class': 'label' }, g[1]);
    });
    channels.forEach(function (c, i) {
      TICK_Y[i].forEach(function (y, j) {
        line(svg, left - 5, y + .5, left, y + .5, '#808080', 1);
        line(svg, left, y + .5, right - 4, y + .5, '#808080', 1, '3 4');
        el(svg, 'text', { x: 55, y: y + 4, 'text-anchor': 'end', 'class': 'label' }, c.ticks[j]);
      });
      var mid = 84 + i * 105;
      el(svg, 'circle', { cx: 7, cy: mid, r: 4, fill: c.color });
      el(svg, 'text', { transform: 'translate(11 ' + (mid - 6) + ') rotate(-90)', 'class': 'channel' }, c.name);
      var holder = el(svg, 'g', { 'clip-path': 'url(#' + id + '-clip)' });
      var g = el(holder, 'g', { transform: 'translate(' + (left - 60 * k) + ' 0) scale(' + k + ' 1)' });
      if (c.starts) {
        el(g, 'path', { d: c.starts.map(function (s) { return pwm(s, i * 317.5); }).join(''), fill: 'none', stroke: c.color, 'stroke-width': 1, 'shape-rendering': 'crispEdges' });
      } else {
        var parts = [];
        for (var n = 0; n + 1 < c.x.length; n++) parts.push(currentCycle(c.x[n], c.x[n + 1], c, c.peaks[n], c.peaks[n + 1], c.troughs[n]));
        parts.push(c.x[n] + ' ' + (c.peaks[n] / 3 - 9));
        el(g, 'path', { d: 'M' + parts.join('L'), fill: 'none', stroke: c.color, 'stroke-width': 1.5 });
      }
    });
    line(svg, left, 112, right, 112, '#808080', 2);
    line(svg, left, 217, right, 217, '#808080', 2);
    el(svg, 'rect', { x: left + .5, y: 6.5, width: right - left - 1, height: 316, fill: 'none', stroke: '#808080', 'shape-rendering': 'crispEdges' });
    var cx = Math.round(left + 471 * k);
    line(svg, cx, 6, cx, 323, '#ffa500', 2);
    el(svg, 'rect', { x: cx - 27, y: 323, width: 52, height: 14, rx: 4, fill: '#ffa500' });
    el(svg, 'text', { x: cx - 1, y: 334, 'text-anchor': 'middle', 'class': 'chip-text' }, '0:11.872');
  }

  drawOverview();
  drawScope('voltage', [
    { name: 'AI 2/U1 [V]', color: '#eb5e56', ticks: ['14.5', '-2.4', '-19.2'], starts: [115, 520, 922, 1330, 1738, 2140] },
    { name: 'AI 2/U2 [V]', color: '#bae465', ticks: ['14.7', '-1.8', '-18.2'], starts: [250, 655, 1057, 1459, 1870, 2275] },
    { name: 'AI 2/U3 [V]', color: '#9a76c2', ticks: ['13.9', '-2.5', '-19.0'], starts: [-20, 382, 790, 1198, 1600, 2003] }
  ]);
  drawScope('current', [
    { name: 'AI 2/I1 [A]', color: '#7f9c46', ticks: ['2.73', '0.89', '-0.95'], base: 240, high: 196, low: 284,
      x: [-66, 69.3, 204.5, 341.5, 477.4, 609.7, 745], peaks: [103, 103, 100, 64, 52, 103, 100], troughs: [352, 352, 335, 335, 352, 352] },
    { name: 'AI 2/I2 [A]', color: '#6a5588', ticks: ['1.79', '0.28', '-1.24'], base: 534, high: 481, low: 584,
      x: [-21, 114.3, 247.4, 382.5, 519, 654.7, 790], peaks: [400, 365, 406, 403, 370, 365, 400], troughs: [660, 661, 667, 643, 647, 661] },
    { name: 'AI 2/I3 [A]', color: '#cf7a34', ticks: ['1.71', '0.03', '-1.66'], base: 838, high: 791, low: 886,
      x: [24, 159, 294.5, 427, 562, 699, 834], peaks: [700, 697, 690, 727, 725, 697, 700], troughs: [960, 960, 978, 985, 957, 963] }
  ]);
})();
```
